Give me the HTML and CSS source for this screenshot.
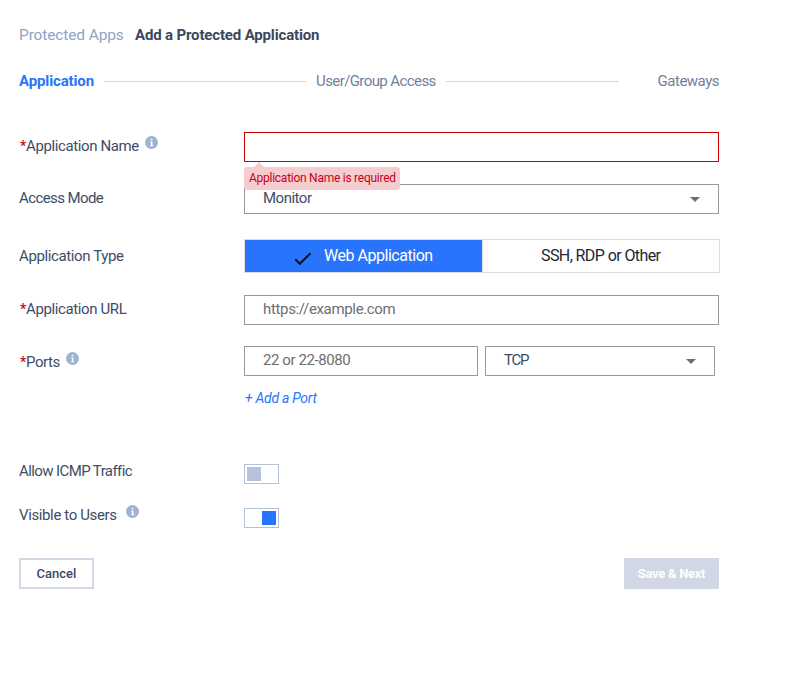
FILE: index.html
```html
<!DOCTYPE html>
<html lang="en">
<head>
<meta charset="utf-8">
<title>Add a Protected Application</title>
<link rel="stylesheet" href="styles.css">
</head>
<body>
<svg class="defs" width="0" height="0" aria-hidden="true">
  <symbol id="info" viewBox="0 0 13 13"><circle cx="6.5" cy="6.5" r="6.5" fill="#9fb3d1"/><path d="M5.8 2.8h1.6v1.5H5.8zM5.2 5.4h2.2v3.9h.8v1H5.1v-1h.8V6.4h-.7z" fill="#fff"/></symbol>
</svg>
<main class="page">
  <nav class="crumbs"><a class="crumb">Protected Apps</a><h1 class="title">Add a Protected Application</h1></nav>
  <div class="steps">
    <span class="step active">Application</span><i class="line first"></i>
    <span class="step users">User/Group Access</span><i class="line second"></i>
    <span class="step last">Gateways</span>
  </div>
  <form class="form">
    <div class="row name">
      <label class="label"><b class="star">*</b><span class="t-name">Application Name</span><svg class="info"><use href="#info"/></svg></label>
      <div class="control"><div class="field error"></div><div class="tip"><span class="t-tip">Application Name is required</span></div></div>
    </div>
    <div class="row mode">
      <label class="label"><span class="t-mode">Access Mode</span></label>
      <div class="control field select"><span class="t-monitor">Monitor</span><i class="caret"></i></div>
    </div>
    <div class="row type">
      <label class="label"><span class="t-type">Application Type</span></label>
      <div class="control segments">
        <div class="segment on"><svg class="check" viewBox="0 0 18 14"><path d="M1.2 7.3l4.6 4.5L16.5 1.3" fill="none" stroke="#0b1220" stroke-width="2.1"/></svg><span class="t-web">Web Application</span></div>
        <div class="segment"><span class="t-ssh">SSH, RDP or Other</span></div>
      </div>
    </div>
    <div class="row url">
      <label class="label"><b class="star">*</b><span class="t-url">Application URL</span></label>
      <div class="control field hint"><span class="t-https">https://example.com</span></div>
    </div>
    <div class="row ports">
      <label class="label"><b class="star">*</b><span class="t-ports">Ports</span><svg class="info"><use href="#info"/></svg></label>
      <div class="control pair">
        <div class="field hint"><span class="t-range">22 or 22-8080</span></div>
        <div class="field select"><span class="t-tcp">TCP</span><i class="caret"></i></div>
      </div>
    </div>
    <a class="add"><span class="t-add">+ Add a Port</span></a>
    <div class="row icmp">
      <label class="label"><span class="t-icmp">Allow ICMP Traffic</span></label>
      <div class="toggle"><i class="knob"></i></div>
    </div>
    <div class="row visible">
      <label class="label"><span class="t-visible">Visible to Users</span><svg class="info"><use href="#info"/></svg></label>
      <div class="toggle checked"><i class="knob"></i></div>
    </div>
    <div class="actions">
      <button type="button" class="button cancel"><span class="t-cancel">Cancel</span></button>
      <button type="button" class="button save"><span class="t-save">Save &amp; Next</span></button>
    </div>
  </form>
</main>
</body>
</html>
```
FILE: styles.css
```css
* { box-sizing: border-box; }
body { margin: 0; background: #fff; color: #3d4d66; font: 15px/20px Roboto, "Liberation Sans", sans-serif; }
.defs { position: absolute; }
.page { width: 720px; padding: 25px 0 0 19px; }
.crumbs { display: flex; height: 20px; white-space: nowrap; }
.crumb { width: 116px; color: #8ea4c3; font-size: 15.5px; letter-spacing: -0.13px; }
.title { margin: 0; font-size: 15px; line-height: 20px; font-weight: 700; color: #3a485e; letter-spacing: -0.16px; }
.steps { display: flex; align-items: center; width: 700px; height: 20px; margin-top: 26px; color: #71819d; white-space: nowrap; }
.active { width: 85px; color: #2874fc; font-weight: 700; letter-spacing: -0.13px; }
.line { height: 1px; background: #d0d7e6; }
.first { width: 202px; margin-right: 10px; }
.users { width: 130px; letter-spacing: -0.59px; }
.second { width: 173px; }
.last { margin-left: auto; letter-spacing: -0.5px; }
.form { margin-top: 41px; }
.row { display: grid; grid-template-columns: 225px 475px; height: 30px; align-items: start; white-space: nowrap; }
.label { display: flex; height: 20px; margin-top: 4px; }
.star { width: 7px; padding-left: 1px; color: #d0021b; font-size: 14px; font-weight: 500; }
.info { width: 13px; height: 13px; margin: 0 0 0 6px; }
.name { position: relative; z-index: 1; }
.control { position: relative; }
.field { position: relative; height: 30px; padding: 3px 18px; border: 1px solid #999; background: #fff; }
.error { border-color: #c00; }
.hint { color: #6e6e6e; }
.tip { position: absolute; left: 0; top: 35px; width: 156px; height: 23px; padding-left: 5px; border-radius: 3px; background: #f5cdce; color: #c9001a; font-size: 12px; line-height: 22px; }
.tip::before { content: ""; position: absolute; left: 10px; top: -5px; border: 5px solid transparent; border-top: 0; border-bottom-color: #f5cdce; }
.mode { margin-top: 22px; }
.select { display: flex; justify-content: space-between; }
.caret { width: 0; height: 0; margin-top: 9px; border: 5px solid transparent; border-bottom: 0; border-top-color: #6f6f6f; }
.type { margin-top: 25px; height: 34px; }
.type .label { margin-top: 7px; }
.segments { display: grid; grid-template-columns: 238px 236px; width: 476px; height: 34px; border: 1px solid #ddd; color: #222733; font-size: 16px; }
.segment { padding: 6px 0 0 58px; }
.segment.on { display: flex; padding-left: 49px; border-right: 1px solid #ddd; background: #2874fc; color: #fff; }
.check { width: 18px; height: 14px; margin: 6px 12px 0 0; }
.url { margin-top: 22px; }
.ports { margin-top: 21px; }
.ports .label { margin-top: 6px; }
.pair { display: grid; grid-template-columns: 234px 230px; gap: 7px; }
.add { display: block; width: 80px; height: 20px; margin: 12px 0 0 226px; color: #2874fc; font-size: 14px; font-style: italic; white-space: nowrap; }
.icmp { height: 20px; margin-top: 56px; }
.visible { height: 20px; margin-top: 24px; }
.icmp .label, .visible .label { margin-top: -3px; }
.visible .info { margin-left: 9px; }
.toggle { width: 35px; height: 20px; padding: 2px; border: 1px solid #b3c1db; }
.knob { display: block; width: 14px; height: 14px; background: #b6c3dc; }
.checked .knob { margin-left: 15px; background: #2874fc; }
.actions { display: flex; justify-content: space-between; width: 700px; margin-top: 30px; }
.button { height: 31px; padding: 0; border: 2px solid #d1d7e5; background: #fff; color: #3a485e; font: 500 13px/20px Roboto, sans-serif; white-space: nowrap; }
.cancel { width: 75px; }
.save { width: 95px; background: #d1d7e5; color: #fff; font-weight: 700; }

.t-name, .t-type, .t-url, .t-visible { letter-spacing: -0.38px; }
.t-tip { letter-spacing: -0.26px; }
.t-mode, .t-icmp { letter-spacing: -0.6px; }
.t-monitor { letter-spacing: -0.5px; }
.t-web { letter-spacing: -0.47px; }
.t-ssh { letter-spacing: -0.59px; }
.t-https { letter-spacing: -0.34px; }
.t-ports, .t-range { letter-spacing: -0.42px; }
.t-tcp { letter-spacing: -1.2px; }
.t-add, .t-save { letter-spacing: -0.3px; }
```
